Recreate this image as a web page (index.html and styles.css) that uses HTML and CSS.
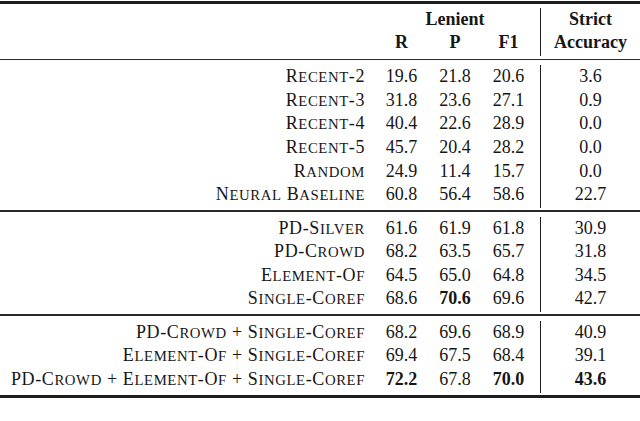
FILE: index.html
```html
<!DOCTYPE html>
<html>
<head>
<meta charset="utf-8">
<link rel="stylesheet" href="styles.css">
</head>
<body>
<div class="table">
  <div class="rule rule-thick rule-top"></div>
  <div class="section head">
    <div class="main">
      <div class="label"></div>
      <div class="span3 b">Lenient</div>
      <div class="label"></div>
      <div class="num b">R</div>
      <div class="num b">P</div>
      <div class="num b">F1</div>
    </div>
    <div class="strict">
      <div class="b">Strict</div>
      <div class="b">Accuracy</div>
    </div>
  </div>
  <div class="rule rule-mid"></div>
  <div class="section">
    <div class="main">
      <div class="label">R<span class="sc">ECENT</span>-2</div><div class="num">19.6</div><div class="num">21.8</div><div class="num">20.6</div>
      <div class="label">R<span class="sc">ECENT</span>-3</div><div class="num">31.8</div><div class="num">23.6</div><div class="num">27.1</div>
      <div class="label">R<span class="sc">ECENT</span>-4</div><div class="num">40.4</div><div class="num">22.6</div><div class="num">28.9</div>
      <div class="label">R<span class="sc">ECENT</span>-5</div><div class="num">45.7</div><div class="num">20.4</div><div class="num">28.2</div>
      <div class="label">R<span class="sc">ANDOM</span></div><div class="num">24.9</div><div class="num">11.4</div><div class="num">15.7</div>
      <div class="label">N<span class="sc">EURAL</span> B<span class="sc">ASELINE</span></div><div class="num">60.8</div><div class="num">56.4</div><div class="num">58.6</div>
    </div>
    <div class="strict">
      <div>3.6</div><div>0.9</div><div>0.0</div><div>0.0</div><div>0.0</div><div>22.7</div>
    </div>
  </div>
  <div class="rule rule-mid"></div>
  <div class="section">
    <div class="main">
      <div class="label">PD-S<span class="sc">ILVER</span></div><div class="num">61.6</div><div class="num">61.9</div><div class="num">61.8</div>
      <div class="label">PD-C<span class="sc">ROWD</span></div><div class="num">68.2</div><div class="num">63.5</div><div class="num">65.7</div>
      <div class="label">E<span class="sc">LEMENT</span>-O<span class="sc">F</span></div><div class="num">64.5</div><div class="num">65.0</div><div class="num">64.8</div>
      <div class="label">S<span class="sc">INGLE</span>-C<span class="sc">OREF</span></div><div class="num">68.6</div><div class="num b">70.6</div><div class="num">69.6</div>
    </div>
    <div class="strict">
      <div>30.9</div><div>31.8</div><div>34.5</div><div>42.7</div>
    </div>
  </div>
  <div class="rule rule-mid"></div>
  <div class="section">
    <div class="main">
      <div class="label">PD-C<span class="sc">ROWD</span> + S<span class="sc">INGLE</span>-C<span class="sc">OREF</span></div><div class="num">68.2</div><div class="num">69.6</div><div class="num">68.9</div>
      <div class="label">E<span class="sc">LEMENT</span>-O<span class="sc">F</span> + S<span class="sc">INGLE</span>-C<span class="sc">OREF</span></div><div class="num">69.4</div><div class="num">67.5</div><div class="num">68.4</div>
      <div class="label">PD-C<span class="sc">ROWD</span> + E<span class="sc">LEMENT</span>-O<span class="sc">F</span> + S<span class="sc">INGLE</span>-C<span class="sc">OREF</span></div><div class="num b">72.2</div><div class="num">67.8</div><div class="num b">70.0</div>
    </div>
    <div class="strict">
      <div>40.9</div><div>39.1</div><div class="b">43.6</div>
    </div>
  </div>
  <div class="rule rule-thick"></div>
</div>
</body>
</html>
```
FILE: styles.css
```css
html, body {
  margin: 0;
  padding: 0;
  background: #ffffff;
}
body {
  font-family: "Liberation Serif", "Times New Roman", serif;
  font-size: 18px;
  color: #161616;
}
.table {
  width: 640px;
  padding-top: 1px;
}
.rule {
  background: #1e1e1e;
}
.rule-thick {
  height: 2.5px;
}
.rule-mid {
  height: 1.7px;
  background: #2a2a2a;
}
.section {
  display: flex;
  padding: 4.7px 0 2px;
  line-height: 23.6px;
}
.section.head {
  padding: 4.6px 0 3px;
  line-height: 23.33px;
}
.main {
  display: grid;
  grid-template-columns: 375px 53px 54px 53px;
  grid-auto-rows: 23.6px;
}
.head .main {
  grid-auto-rows: 23.33px;
}
.label {
  text-align: right;
  padding-right: 10px;
  letter-spacing: 0.6px;
  white-space: nowrap;
}
.sc {
  font-size: 0.82em;
  line-height: 0;
}
.num {
  text-align: center;
}
.span3 {
  grid-column: span 3;
  text-align: center;
}
.b {
  font-weight: bold;
}
.strict {
  flex: 1;
  margin-left: 5px;
  border-left: 1px solid #1e1e1e;
  text-align: center;
  padding-bottom: 1.5px;
}
.head .strict {
  padding-bottom: 1px;
}
```
